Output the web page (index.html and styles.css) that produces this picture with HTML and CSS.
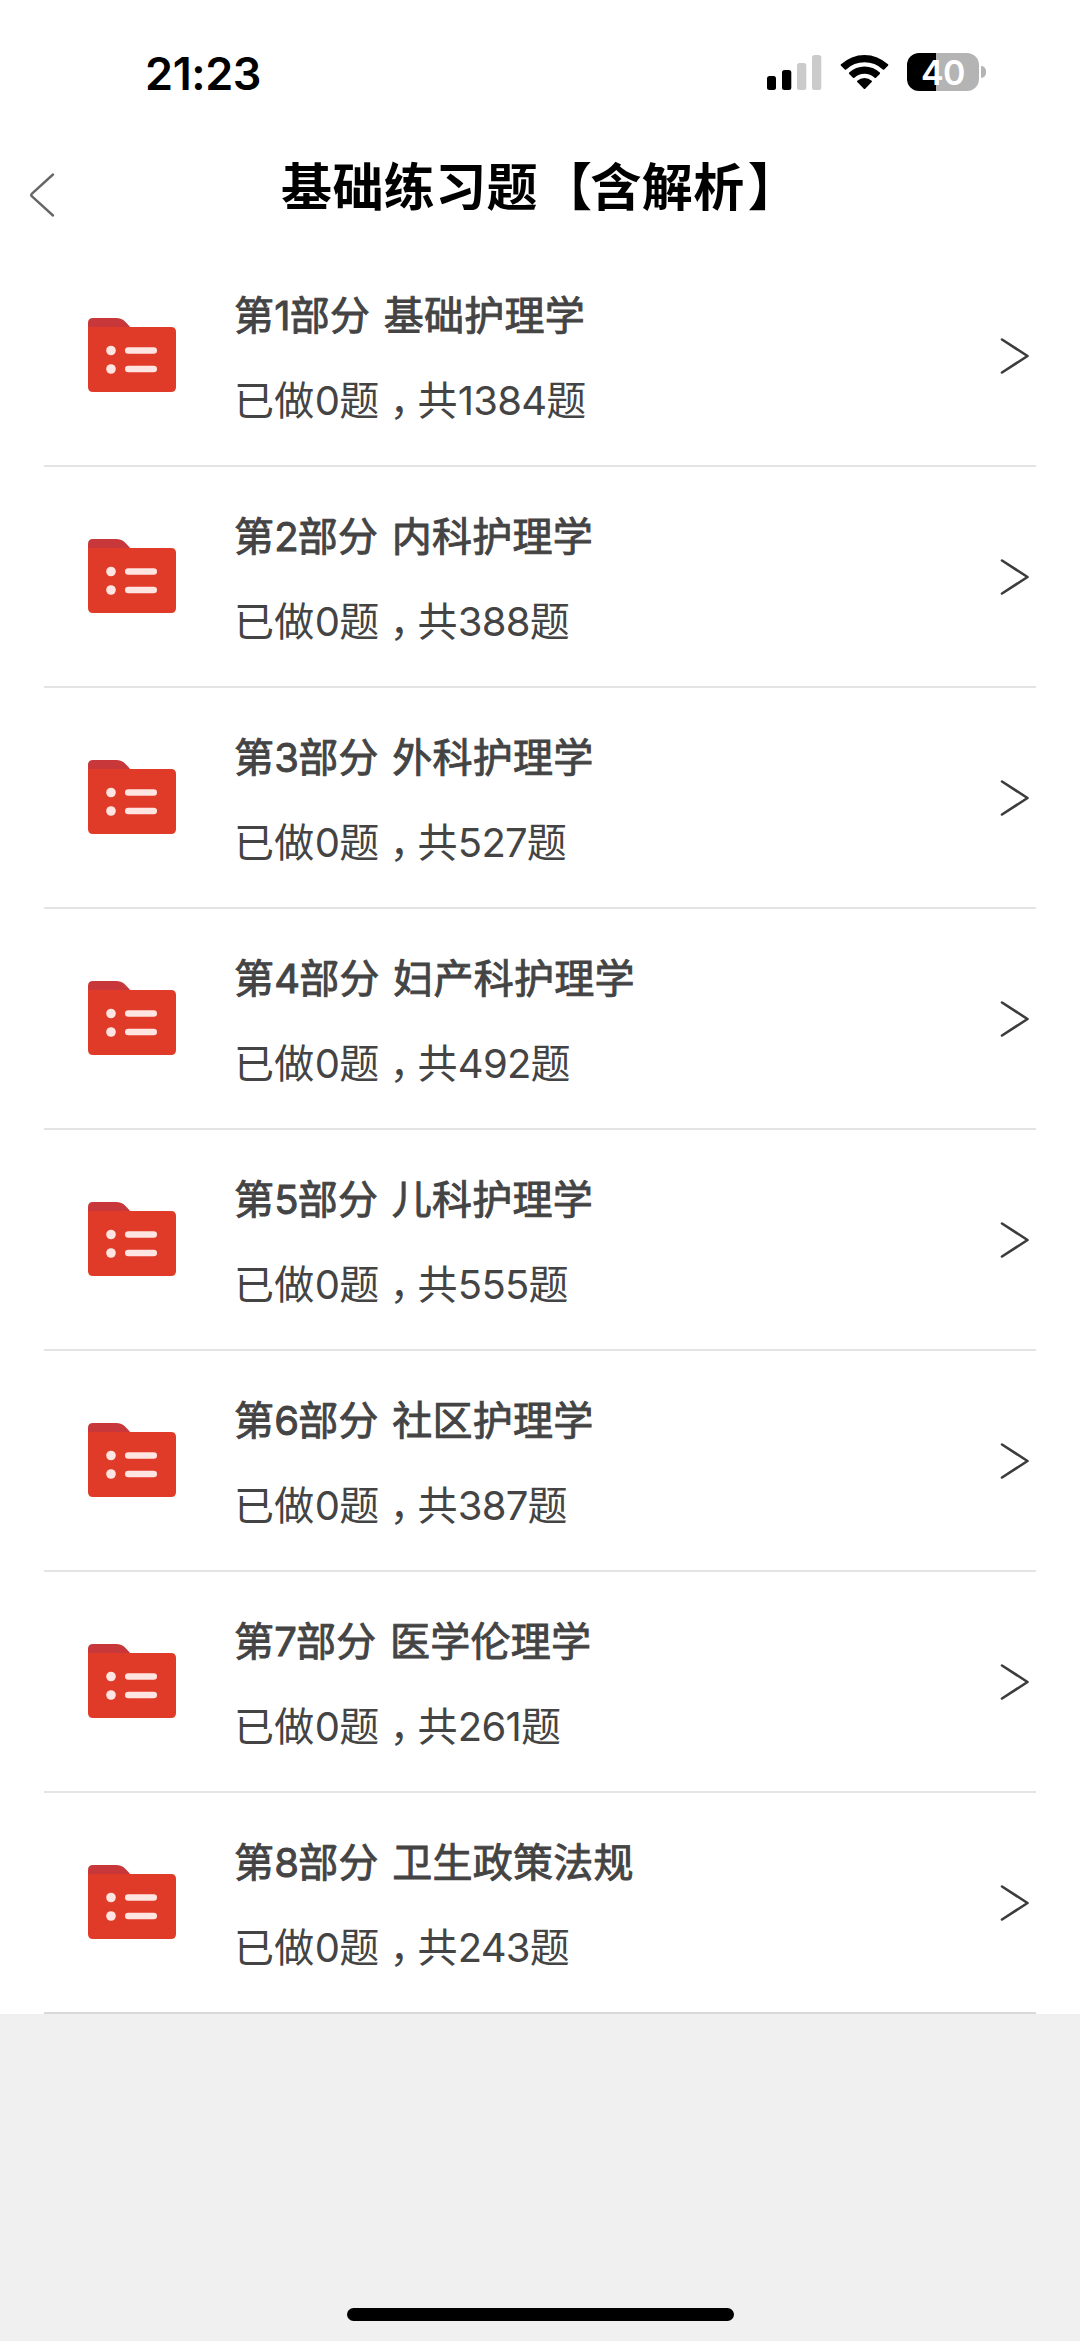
FILE: index.html
```html
<!DOCTYPE html>
<html lang="zh-CN">
<head>
<meta charset="utf-8">
<title>基础练习题【含解析】</title>
<link rel="stylesheet" href="styles.css">
</head>
<body>
<svg class="defs" width="0" height="0" aria-hidden="true">
  <symbol id="folder" viewBox="0 0 90 76">
    <path d="M1 15V6Q1 1 6 1H29Q35 1 38 4.500Q42 8.500 43.500 10.500V15Z" fill="#c8383b"/>
    <path d="M1 10H84Q89 10 89 15V70Q89 75 84 75H6Q1 75 1 70Z" fill="#e03a28"/>
    <g fill="#fee5e1">
      <circle cx="24" cy="33.500" r="4.800"/>
      <circle cx="24" cy="52" r="4.800"/>
      <rect x="38" y="30.200" width="32" height="6.600" rx="3.300"/>
      <rect x="38" y="48.700" width="32" height="6.600" rx="3.300"/>
    </g>
  </symbol>
  <symbol id="arrow" viewBox="0 0 30 38">
    <path d="M2 2.500L27.500 19L2 35.500" fill="none" stroke="#3c3c3e" stroke-width="2.600" stroke-linecap="round" stroke-linejoin="round"/>
  </symbol>
</svg>
<div class="screen">
  <header class="status">
    <time class="clock">21:23</time>
    <div class="indicators">
      <svg class="signal" viewBox="0 0 55 36">
        <rect x="0" y="21" width="9" height="14" rx="2.500"/>
        <rect x="15" y="15" width="9.300" height="20" rx="2.500"/>
        <rect x="30" y="8" width="9.300" height="27" rx="2.500" fill="#cbcbcb"/>
        <rect x="45" y="0" width="9.300" height="35" rx="2.500" fill="#cbcbcb"/>
      </svg>
      <svg class="wifi" viewBox="0 0 50 37">
        <path d="M1 11.700Q.3 11 1 10.300A34.500 34.500 0 0 1 48 10.300Q48.700 11 48 11.700L44.200 15.500Q43.500 16.100 42.800 15.500A26.500 26.500 0 0 0 6.200 15.500Q5.500 16.100 4.800 15.500Z"/>
        <path d="M9.200 19.900Q8.500 19.200 9.200 18.500A22.300 22.300 0 0 1 39.800 18.500Q40.500 19.200 39.800 19.900L36 23.700Q35.300 24.300 34.600 23.700A15 15 0 0 0 14.400 23.700Q13.700 24.300 13 23.700Z"/>
        <path d="M17.300 28Q16.600 27.300 17.300 26.700A11 11 0 0 1 31.700 26.700Q32.400 27.300 31.700 28L25.200 34.800Q24.500 35.400 23.800 34.800Z"/>
      </svg>
      <div class="battery"><span class="level">40</span><i class="nub"></i></div>
    </div>
  </header>
  <nav class="nav">
    <svg class="back" viewBox="0 0 28 46"><path d="M25 2.500L4 21.500Q2.500 23 4 24.500L25 43.500" fill="none" stroke="#666" stroke-width="2.400" stroke-linecap="round"/></svg>
    <h1 class="title">基础练习题<span class="open">【</span>含解析<span class="close">】</span></h1>
  </nav>
  <main class="list">
    <div class="row"><svg class="folder"><use href="#folder"/></svg><div class="info"><div class="name">第<b>1</b>部分 基础护理学</div><div class="count">已做<b>0</b>题<span class="comma">，</span>共<b>1384</b>题</div></div><svg class="arrow"><use href="#arrow"/></svg></div>
    <div class="row"><svg class="folder"><use href="#folder"/></svg><div class="info"><div class="name">第<b>2</b>部分 内科护理学</div><div class="count">已做<b>0</b>题<span class="comma">，</span>共<b>388</b>题</div></div><svg class="arrow"><use href="#arrow"/></svg></div>
    <div class="row"><svg class="folder"><use href="#folder"/></svg><div class="info"><div class="name">第<b>3</b>部分 外科护理学</div><div class="count">已做<b>0</b>题<span class="comma">，</span>共<b>527</b>题</div></div><svg class="arrow"><use href="#arrow"/></svg></div>
    <div class="row"><svg class="folder"><use href="#folder"/></svg><div class="info"><div class="name">第<b>4</b>部分 妇产科护理学</div><div class="count">已做<b>0</b>题<span class="comma">，</span>共<b>492</b>题</div></div><svg class="arrow"><use href="#arrow"/></svg></div>
    <div class="row"><svg class="folder"><use href="#folder"/></svg><div class="info"><div class="name">第<b>5</b>部分 儿科护理学</div><div class="count">已做<b>0</b>题<span class="comma">，</span>共<b>555</b>题</div></div><svg class="arrow"><use href="#arrow"/></svg></div>
    <div class="row"><svg class="folder"><use href="#folder"/></svg><div class="info"><div class="name">第<b>6</b>部分 社区护理学</div><div class="count">已做<b>0</b>题<span class="comma">，</span>共<b>387</b>题</div></div><svg class="arrow"><use href="#arrow"/></svg></div>
    <div class="row"><svg class="folder"><use href="#folder"/></svg><div class="info"><div class="name">第<b>7</b>部分 医学伦理学</div><div class="count">已做<b>0</b>题<span class="comma">，</span>共<b>261</b>题</div></div><svg class="arrow"><use href="#arrow"/></svg></div>
    <div class="row"><svg class="folder"><use href="#folder"/></svg><div class="info"><div class="name">第<b>8</b>部分 卫生政策法规</div><div class="count">已做<b>0</b>题<span class="comma">，</span>共<b>243</b>题</div></div><svg class="arrow"><use href="#arrow"/></svg></div>
  </main>
  <footer class="bottom"><div class="home"></div></footer>
</div>
</body>
</html>
```
FILE: styles.css
```css
* { box-sizing: border-box; }
body {
  margin: 0;
  background: #f0f0f0;
  font-family: Inter, "Noto Sans CJK SC", sans-serif;
}
svg { display: block; flex: none; }
.defs { position: absolute; }
.screen {
  width: 1080px;
  height: 2341px;
  display: flex;
  flex-direction: column;
  overflow: hidden;
}
.status {
  height: 146px;
  padding: 0 94px 0 145px;
  display: flex;
  justify-content: space-between;
  background: #fff;
}
.clock {
  padding-top: 46px;
  font-size: 45px;
  line-height: 56px;
  font-weight: 600;
  letter-spacing: -.4px;
}
.indicators { display: flex; align-items: flex-start; }
.signal { width: 55px; height: 36px; margin-top: 55px; }
.wifi { width: 50px; height: 37px; margin: 54px 0 0 18px; }
.battery { display: flex; align-items: center; gap: 2px; margin: 53px 0 0 17px; }
.level {
  width: 72px;
  height: 38px;
  border-radius: 12px;
  background: linear-gradient(90deg, #000 29px, #b4b4b4 29px);
  color: #fff;
  font-size: 34px;
  line-height: 39px;
  font-weight: 600;
  letter-spacing: -.5px;
  text-align: center;
}
.nub { width: 5px; height: 12px; border-radius: 0 5px 5px 0; background: #b4b4b4; }
.nav {
  height: 100px;
  padding-left: 28px;
  display: flex;
  align-items: flex-start;
  background: #fff;
}
.back { width: 28px; height: 46px; margin-top: 26px; }
.title {
  margin: 6px 0 0 225px;
  font-size: 51px;
  line-height: 72px;
  font-weight: 700;
  letter-spacing: .4px;
  white-space: nowrap;
}
.open { margin: 0 -2px 0 3px; }
.close { margin-left: 3px; }
.list { background: #fff; padding: 0 44px; }
.row {
  height: 221px;
  padding: 0 6px 0 43px;
  display: flex;
  align-items: center;
  border-bottom: 2px solid #e4e4e4;
}
.row:last-child { border-bottom-color: #d9d9d9; }
.folder { width: 90px; height: 76px; margin-bottom: 1px; }
.info {
  flex: 1;
  margin-left: 57px;
  padding-top: 5px;
  color: #444;
  font-size: 40px;
  line-height: 60px;
  letter-spacing: .35px;
  white-space: nowrap;
}
.info b { font-weight: inherit; letter-spacing: -.8px; }
.name { -webkit-text-stroke: .9px #444; word-spacing: 2px; letter-spacing: .25px; }
.count { margin-top: 25px; }
.comma {
  display: inline-block;
  width: 38px;
  padding-left: 10px;
  font-feature-settings: "halt";
}
.arrow { width: 30px; height: 38px; }
.bottom {
  flex: 1;
  padding-bottom: 20px;
  display: flex;
  align-items: flex-end;
  justify-content: center;
}
.home { width: 387px; height: 13px; border-radius: 7px; background: #000; }
```
